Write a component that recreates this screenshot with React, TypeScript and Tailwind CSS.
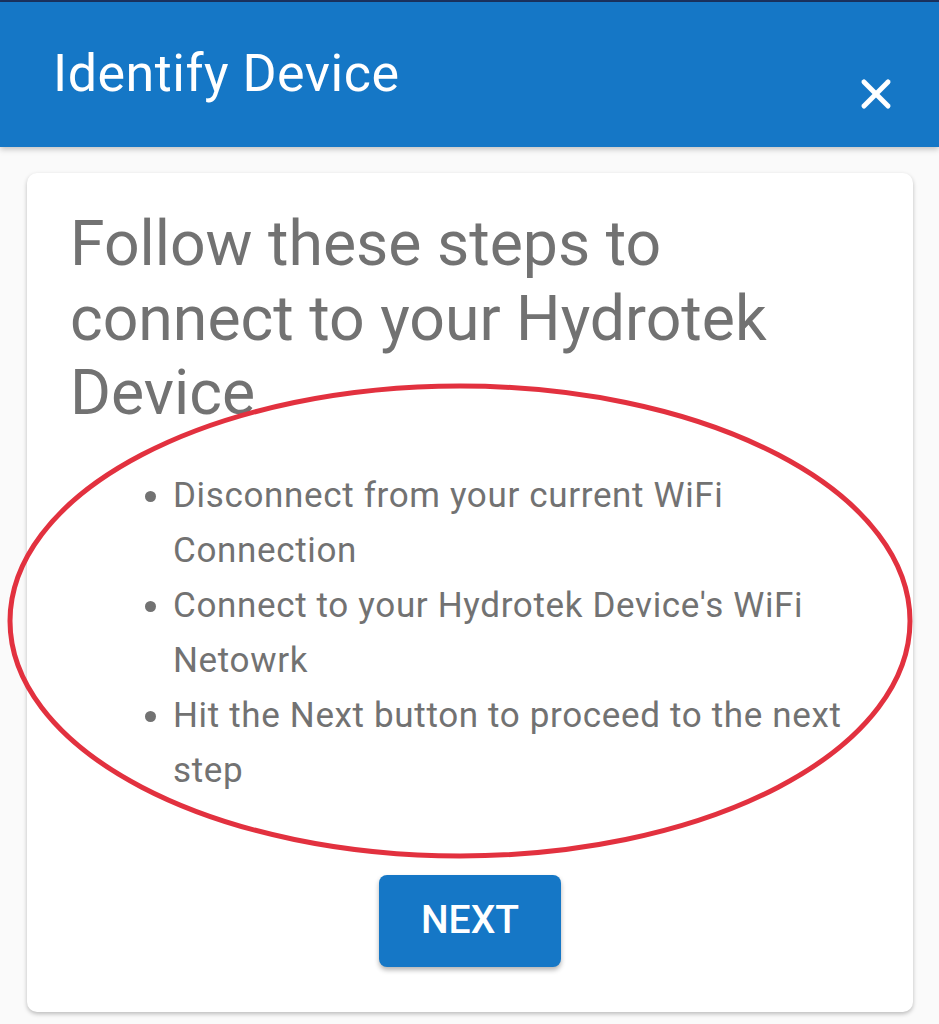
import { X } from 'lucide-react'

const STEPS = [
  'Disconnect from your current WiFi Connection',
  "Connect to your Hydrotek Device's WiFi Netowrk",
  'Hit the Next button to proceed to the next step',
]

export default function App() {
  return (
    <div className="relative min-h-[1024px] w-[939px] bg-[#fafafa] font-['Roboto',sans-serif] overflow-hidden">
      <div className="h-[2px] bg-[#1b3360]" />
      {/* Header */}
      <header className="relative z-10 flex h-[145px] items-start justify-between bg-[#1577c6] pl-[53px] pr-[39px] shadow-[0_2px_6px_rgba(0,0,0,0.25)]">
        <h1 className="mt-[42px] text-[52px] leading-[60px] tracking-[0.5px] font-normal text-white">Identify Device</h1>
        <X className="mt-[68px] text-white" size={48} strokeWidth={2.5} />
      </header>

      {/* Card */}
      <main className="px-[27px] pt-[26px]">
        <div className="w-[886px] h-[839px] rounded-[10px] bg-white shadow-[0_2px_4px_rgba(0,0,0,0.25)] px-[43px] pt-[34px]">
          <h2 className="text-[62.5px] leading-[74.5px] font-normal text-[#727272]">
            Follow these steps to connect to your Hydrotek Device
          </h2>

          <ul className="mt-[37px] list-disc pl-[103px] pr-[20px] text-[35px] leading-[55px] tracking-[0.65px] text-[#727272]">
            {STEPS.map((s) => (
              <li key={s}>{s}</li>
            ))}
          </ul>

          <div className="mt-[77px] flex justify-center">
            <button className="h-[92px] w-[182px] rounded-[8px] bg-[#1577c6] text-[39px] font-medium text-white shadow-[0_3px_5px_rgba(0,0,0,0.3)]">
              NEXT
            </button>
          </div>
        </div>
      </main>

      {/* Red annotation ellipse */}
      <svg className="pointer-events-none absolute left-0 top-0" width="939" height="1024">
        <ellipse cx="460" cy="621" rx="450" ry="235" fill="none" stroke="#e2313f" strokeWidth="5" />
      </svg>
    </div>
  )
}
